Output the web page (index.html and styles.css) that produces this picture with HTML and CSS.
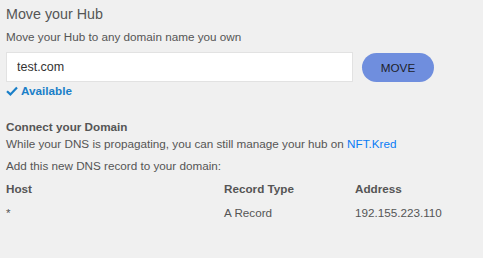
FILE: index.html
```html
<!DOCTYPE html>
<html lang="en">
<head>
    <meta charset="UTF-8">
    <meta name="viewport" content="width=device-width, initial-scale=1.0">
    <title>Move your Hub</title>
    <link rel="stylesheet" href="styles.css">
</head>
<body>

<div class="panel">
    <h2>Move your Hub</h2>
    <p class="hint">Move your Hub to any domain name you own</p>

    <!-- Domain field -->
    <div class="domain-row">
        <input class="domain-input" type="text" value="test.com">
        <button class="move-btn">MOVE</button>
    </div>
    <div class="status">
        <svg width="12" height="10" viewBox="0 0 12 10"><path d="M1 5.2 L4.4 8.4 L11 1.6" fill="none" stroke="#1a7fc8" stroke-width="2.2"/></svg>
        Available
    </div>

    <!-- DNS info -->
    <h4>Connect your Domain</h4>
    <p class="text">While your DNS is propagating, you can still manage your hub on <a href="#">NFT.Kred</a></p>
    <p class="text add">Add this new DNS record to your domain:</p>

    <div class="records">
        <div class="head">Host</div>
        <div class="head">Record Type</div>
        <div class="head">Address</div>
        <div>*</div>
        <div>A Record</div>
        <div>192.155.223.110</div>
    </div>
</div>

</body>
</html>
```

FILE: styles.css
```css
body {
    font-family: "Liberation Sans", Arial, sans-serif;
    margin: 0;
    padding: 0;
    background: #f0f0f0;
    color: #555;
}
.panel {
    padding: 4px 6px;
}
.panel h2 {
    font-size: 14.3px;
    font-weight: normal;
    margin: 0;
    line-height: 20px;
}
.hint {
    font-size: 11.7px;
    margin: 6px 0 0;
    line-height: 14px;
}
.domain-row {
    display: flex;
    align-items: center;
    margin-top: 8px;
}
.domain-input {
    width: 347px;
    height: 30px;
    box-sizing: border-box;
    border: 1px solid #e2e2e2;
    background: #fff;
    font-family: inherit;
    font-size: 12.5px;
    color: #333;
    padding: 0 10px;
    outline: none;
}
.move-btn {
    margin-left: 9px;
    width: 72px;
    height: 29px;
    border: none;
    border-radius: 15px;
    background: #6f8ede;
    color: #1e1e2a;
    font-family: inherit;
    font-size: 11.7px;
    cursor: pointer;
}
.status {
    display: flex;
    align-items: center;
    gap: 3px;
    font-size: 11.7px;
    font-weight: bold;
    color: #1a7fc8;
    margin-top: 2px;
    line-height: 14px;
}
.panel h4 {
    font-size: 11.7px;
    margin: 22px 0 0;
    line-height: 14px;
}
.text {
    font-size: 11.7px;
    margin: 3px 0 0;
    line-height: 14px;
}
.text a {
    color: #0a7cf5;
    text-decoration: none;
}
.add {
    margin-top: 8px;
}
.records {
    display: grid;
    grid-template-columns: 218px 131px auto;
    row-gap: 10px;
    font-size: 11.7px;
    line-height: 14px;
    margin-top: 9px;
}
.records .head {
    font-weight: bold;
}
```
